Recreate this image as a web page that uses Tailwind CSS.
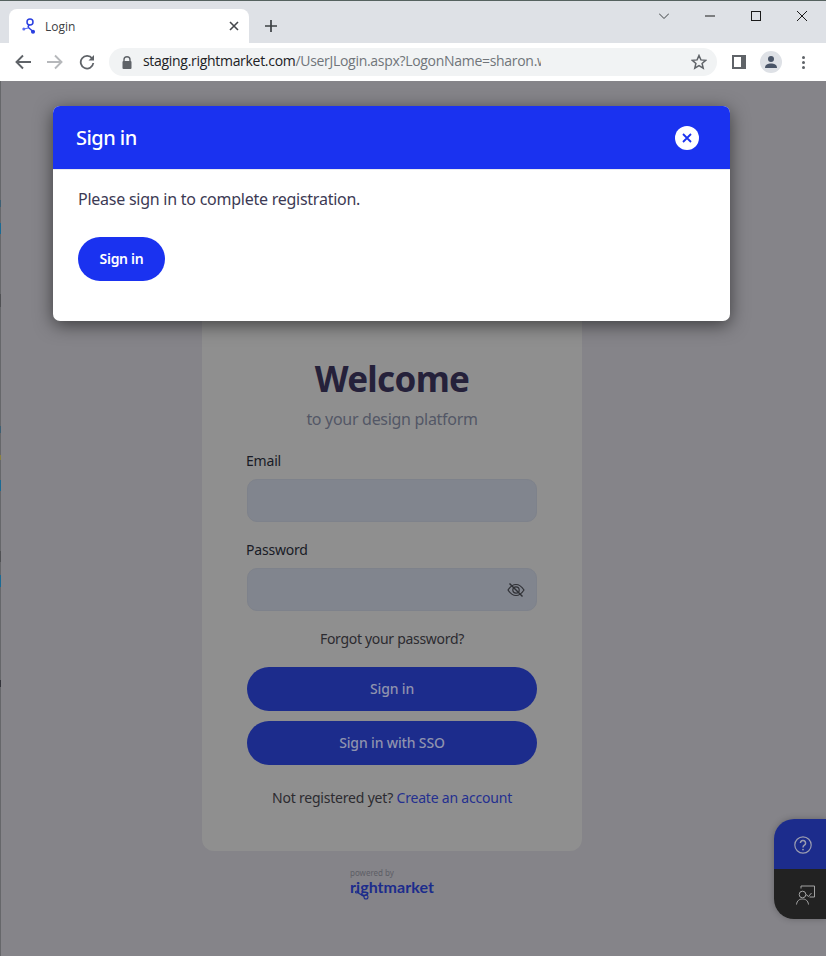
<!DOCTYPE html>
<html>
<head>
<meta charset="utf-8">
<script src="https://cdn.jsdelivr.net/npm/@tailwindcss/browser@4"></script>
</head>
<body class="w-[826px] h-[956px] overflow-hidden bg-[#858489] font-['Noto_Sans',sans-serif]">
<div class="flex flex-col h-[956px] relative">
  <!-- tab strip -->
  <header class="h-[43px] bg-[#dee1e6] border-t border-[#55625f] flex items-end pl-[9px] relative">
    <div class="w-[240px] h-[34px] bg-white rounded-t-[8px] flex items-center pl-[13px] pr-[10px]">
      <svg class="w-[14px] h-[16px]" viewBox="0 0 14 16" fill="none" stroke="#2a3fe0" stroke-width="1.5"><circle cx="8" cy="4" r="3"/><path d="M7.5 7 C5.5 8 6 9.5 7.5 10.5 L10.5 13"/><circle cx="11" cy="13.8" r="1.3" fill="#2a3fe0"/><path d="M1.5 11 L6.5 10" stroke="#5a6cf0" stroke-width="1.2"/><circle cx="1.8" cy="11" r="1.5" fill="#5a6cf0" stroke="none"/></svg>
      <span class="ml-[9px] pt-[1px] text-[12px] text-[#3c4043] font-['Open_Sans',sans-serif]">Login</span>
      <svg class="w-[10px] h-[10px] ml-auto" viewBox="0 0 10 10" stroke="#45484c" stroke-width="1.6"><path d="M1 1 L9 9 M9 1 L1 9"/></svg>
    </div>
    <svg class="w-[12px] h-[12px] ml-[16px] mb-[11px]" viewBox="0 0 12 12" stroke="#3c4043" stroke-width="1.7"><path d="M6 0 V12 M0 6 H12"/></svg>
    <div class="ml-auto flex items-center h-[30px] self-start">
      <svg class="w-[10px] h-[6px] mr-[36px]" viewBox="0 0 10 6" fill="none" stroke="#3c4043"><path d="M0 0.5 L5 5.5 L10 0.5"/></svg>
      <svg class="w-[10px] h-[2px] mr-[36px]" viewBox="0 0 10 2" stroke="#1a1a1a"><path d="M0 1 H10"/></svg>
      <svg class="w-[10px] h-[10px] mr-[36px]" viewBox="0 0 10 10" fill="none" stroke="#1a1a1a"><rect x="0.5" y="0.5" width="9" height="9"/></svg>
      <svg class="w-[10px] h-[10px] mr-[19px]" viewBox="0 0 10 10" stroke="#1a1a1a"><path d="M0 0 L10 10 M10 0 L0 10"/></svg>
    </div>
  </header>
  <!-- toolbar -->
  <nav class="h-[38px] bg-white flex items-center pl-[15px] pr-[21px]">
    <svg class="w-[16px] h-[16px]" viewBox="0 0 16 16" fill="none" stroke="#5f6368" stroke-width="1.9"><path d="M16 8 H2 M8 1.5 L1.5 8 L8 14.5"/></svg>
    <svg class="w-[16px] h-[16px] ml-[16px]" viewBox="0 0 16 16" fill="none" stroke="#b6b8bb" stroke-width="1.9"><path d="M0 8 H14 M8 1.5 L14.5 8 L8 14.5"/></svg>
    <svg class="w-[16px] h-[16px] ml-[16px]" viewBox="0 0 16 16" fill="none"><path d="M13.2 4.6 A6.3 6.3 0 1 0 14.3 9" stroke="#5f6368" stroke-width="1.8"/><path d="M15 1 V6.5 H9.5 Z" fill="#5f6368"/></svg>
    <div class="ml-[14px] w-[608px] h-[28px] rounded-full bg-[#f1f3f4] flex items-center pl-[13px] pr-[10px]">
      <svg class="w-[10px] h-[13px] shrink-0" viewBox="0 0 10 13"><path d="M2 6 V3.8 a3 3 0 0 1 6 0 V6" fill="none" stroke="#5f6368" stroke-width="1.4"/><rect x="0.5" y="5" width="9" height="8" rx="1" fill="#5f6368"/></svg>
      <div class="ml-[11px] w-[398px] shrink-0 overflow-hidden whitespace-nowrap text-[14px] leading-[26px] pb-[2px] tracking-[-0.3px] text-[#70757a] font-['Open_Sans',sans-serif]"><span class="text-[#202124]">staging.rightmarket.com</span>/UserJLogin.aspx?LogonName=sharon.w</div>
      <svg class="w-[16px] h-[16px] ml-auto" viewBox="0 0 16 16" fill="none" stroke="#5f6368" stroke-width="1.5"><path d="M8 1.5 L9.9 5.9 L14.7 6.3 L11.1 9.4 L12.2 14.1 L8 11.6 L3.8 14.1 L4.9 9.4 L1.3 6.3 L6.1 5.9 Z"/></svg>
    </div>
    <div class="ml-[15px] w-[14px] h-[14px] bg-[#5f6368] p-[2px] pr-[5px] flex"><div class="flex-1 bg-white"></div></div>
    <div class="ml-[14px] w-[22px] h-[22px] rounded-full bg-[#dee1e6] flex items-center justify-center">
      <svg class="w-[14px] h-[14px]" viewBox="0 0 14 14" fill="#4a5568"><circle cx="7" cy="4" r="3"/><path d="M1 13 C1 9.5 4 8.5 7 8.5 S13 9.5 13 13 Z"/></svg>
    </div>
    <div class="ml-auto flex flex-col gap-[2px]"><span class="w-[3px] h-[3px] rounded-full bg-[#5f6368]"></span><span class="w-[3px] h-[3px] rounded-full bg-[#5f6368]"></span><span class="w-[3px] h-[3px] rounded-full bg-[#5f6368]"></span></div>
  </nav>
  <!-- page (dimmed by the modal backdrop) -->
  <main class="flex-1 bg-[#858489] flex flex-col items-center pt-[219px] pr-[42px]">
    <section class="w-[380px] h-[551px] bg-[#8f8f8f] rounded-b-[12px] flex flex-col px-[44px] pt-[55px]">
      <h1 class="text-center text-[35px] leading-[48px] font-bold text-[#25213a] tracking-[-0.7px]">Welcome</h1>
      <p class="text-center text-[16px] leading-[24px] mt-[4px] tracking-[-0.3px] text-[#535766]">to your design platform</p>
      <label class="text-[14px] leading-[20px] mt-[20px] tracking-[-0.2px] text-[#191b26]">Email</label>
      <div class="mx-[1px] mt-[8px] h-[43px] rounded-[10px] bg-[#81858e] border border-[#7e828b]"></div>
      <label class="text-[14px] leading-[20px] mt-[18px] tracking-[-0.2px] text-[#191b26]">Password</label>
      <div class="mx-[1px] mt-[8px] h-[43px] rounded-[10px] bg-[#81858e] border border-[#7e828b] flex items-center justify-end pr-[11px]">
        <svg class="w-[18px] h-[16px]" viewBox="0 0 18 16" fill="none" stroke="#2f3035" stroke-width="1.2"><path d="M1 8 C4 3.5 6.5 2.5 9 2.5 S14 3.5 17 8 C14 12.5 11.5 13.5 9 13.5 S4 12.5 1 8 Z"/><circle cx="9" cy="8" r="3.2"/><path d="M2.5 1.5 L15.5 14.5" stroke-width="1.4"/></svg>
      </div>
      <p class="text-center text-[14px] leading-[20px] mt-[18px] tracking-[-0.3px] text-[#2c2b30]">Forgot your password?</p>
      <button class="mx-[1px] mt-[18px] h-[44px] pb-[1px] rounded-full bg-[#1c2c8c] text-[14px] font-medium tracking-[-0.15px] text-[#8f93ae]">Sign in</button>
      <button class="mx-[1px] mt-[10px] h-[44px] pb-[1px] rounded-full bg-[#1c2c8c] text-[14px] font-medium tracking-[-0.15px] text-[#8f93ae]">Sign in with SSO</button>
      <p class="text-center text-[14px] leading-[20px] mt-[23px] tracking-[-0.2px] text-[#2c2b30]">Not registered yet? <a class="text-[#24308f]">Create an account</a></p>
    </section>
    <div class="mt-[17px] w-[84px] relative">
      <p class="text-[8px] leading-[10px] text-[#5d5e66]">powered by</p>
      <p class="mt-[1px] text-[16px] leading-[16px] font-bold tracking-[0.05px] text-[#1c2c8c] font-['Lato',sans-serif]">rightmarket</p>
      <svg class="absolute left-[5px] top-[22px] w-[16px] h-[10px]" viewBox="0 0 16 10" fill="none" stroke="#1c2c8c" stroke-width="1.1"><circle cx="1.5" cy="2" r="1"/><path d="M2.5 2.5 L9 6.5"/><circle cx="11" cy="7" r="2"/></svg>
    </div>
  </main>

  <!-- desktop showing through at the window's left edge -->
  <div class="absolute left-0 top-[81px] w-px h-[875px] bg-[#66676a]">
    <span class="absolute left-0 top-[119px] w-px h-[7px] bg-[#3d5f73]"></span>
    <span class="absolute left-0 top-[142px] w-px h-[11px] bg-[#1a6a94]"></span>
    <span class="absolute left-0 top-[213px] w-px h-[13px] bg-[#505154]"></span>
    <span class="absolute left-0 top-[345px] w-px h-[7px] bg-[#3d5f73]"></span>
    <span class="absolute left-0 top-[374px] w-px h-[5px] bg-[#8a8040]"></span>
    <span class="absolute left-0 top-[399px] w-px h-[11px] bg-[#1a6a94]"></span>
    <span class="absolute left-0 top-[470px] w-px h-[11px] bg-[#505154]"></span>
    <span class="absolute left-0 top-[494px] w-px h-[12px] bg-[#1a6a94]"></span>
    <span class="absolute left-0 top-[599px] w-px h-[7px] bg-[#33343a]"></span>
  </div>

  <!-- help widget -->
  <aside class="absolute left-[774px] top-[819px] w-[52px] h-[100px] rounded-l-[20px] overflow-hidden flex flex-col shadow-[0_0_6px_rgba(0,0,0,0.25)]">
    <div class="h-[50px] bg-[#1c2c8c] flex items-center justify-center pl-[6px] pt-[2px]">
      <svg class="w-[18px] h-[18px]" viewBox="0 0 18 18" fill="none" stroke="#9a9cb0" stroke-width="1.2"><circle cx="9" cy="9" r="8.2"/><path d="M6.4 7 a2.6 2.6 0 1 1 4 2.2 C9.3 10 9 10.4 9 11.5" stroke-width="1.5"/><circle cx="9" cy="13.6" r="0.9" fill="#9a9cb0" stroke="none"/></svg>
    </div>
    <div class="h-[50px] bg-[#222222] flex items-center justify-center pl-[12px] pt-[2px]">
      <svg class="w-[20px] h-[20px]" viewBox="0 0 20 20" fill="none" stroke="#a3a3a3" stroke-width="1"><circle cx="6.5" cy="9.5" r="3.3"/><path d="M0.5 19.5 C1 15.5 3.5 14 6.5 14 S12 15.5 12.5 19.5"/><path d="M5 3.5 V1 H18.5 V12 H13.5 M10 9.5 L12.5 11.5 L15.5 8"/></svg>
    </div>
  </aside>

  <!-- modal -->
  <div role="dialog" class="absolute left-[53px] top-[106px] w-[677px] h-[215px] bg-white rounded-[7px] overflow-hidden shadow-[0_4px_18px_rgba(0,0,0,0.55)]">
    <div class="h-[64px] bg-[#1a32f0] flex items-center pl-[23px] pr-[31px] border-b border-[#e8e8ee]">
      <h2 class="text-[20px] font-medium tracking-[-0.55px] text-white">Sign in</h2>
      <div class="ml-auto w-[24px] h-[24px] rounded-full bg-white flex items-center justify-center">
        <svg class="w-[10px] h-[10px]" viewBox="0 0 10 10" stroke="#1a32f0" stroke-width="1.8"><path d="M1 1 L9 9 M9 1 L1 9"/></svg>
      </div>
    </div>
    <div class="pl-[25px] pt-[17px]">
      <p class="text-[16px] leading-[24px] tracking-[-0.25px] text-[#3c3a54]">Please sign in to complete registration.</p>
      <button class="mt-[26px] w-[87px] h-[44px] pb-[1px] rounded-full bg-[#1a32f0] text-[14px] font-semibold tracking-[-0.3px] text-white">Sign in</button>
    </div>
  </div>
</div>
</body>
</html>
